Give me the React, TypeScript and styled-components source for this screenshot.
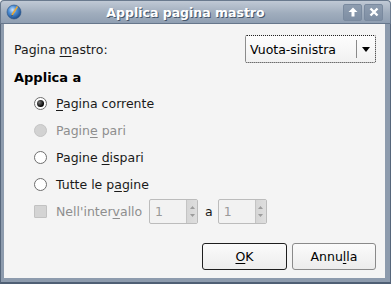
import React from "react";
import styled, { createGlobalStyle } from "styled-components";

const Global = createGlobalStyle`
  html, body { margin: 0; padding: 0; background: #f4f4f4; }
  body { font-family: "DejaVu Sans", Verdana, sans-serif; }
  #root { width: 391px; height: 284px; }
`;

const Window = styled.div`
  width: 391px;
  height: 284px;
  display: flex;
  flex-direction: column;
  box-sizing: border-box;
  background: #8d9bad;
  border-radius: 4px 4px 0 0;
  overflow: hidden;
`;

const TitleBar = styled.div`
  height: 24px;
  flex: none;
  box-sizing: border-box;
  display: flex;
  align-items: center;
  padding: 0 7px 0 5px;
  background: linear-gradient(#c0c9d5, #a0adbd 55%, #909fb2);
  border: 1px solid #6a7a8e;
  border-bottom: 1px solid #66768b;
  border-radius: 4px 4px 0 0;
`;

const Title = styled.div`
  flex: 1;
  text-align: center;
  color: #ffffff;
  font-weight: bold;
  font-size: 12.5px;
  text-shadow: 1px 1px 0 #46566a;
  padding-left: 6px;
`;

const TitleButtons = styled.div`
  display: flex;
  gap: 2px;
`;

const TitleButton = styled.div`
  width: 19px;
  height: 17px;
  border-radius: 2px;
  background: linear-gradient(#8e9db0, #7e8ea3);
  border: 1px solid #7a8a9f;
  box-sizing: border-box;
  display: flex;
  align-items: center;
  justify-content: center;
`;

const Frame = styled.div`
  flex: 1;
  display: flex;
  box-sizing: border-box;
  padding: 0 5px 4px 3px;
  border-left: 1px solid #56667b;
  border-right: 1px solid #56667b;
  border-bottom: 2px solid #4f5f74;
  background: #8d9bad;
`;

const Body = styled.div`
  flex: 1;
  background: #f4f4f4;
  box-sizing: border-box;
  padding: 11px 9px 0 10px;
  display: flex;
  flex-direction: column;
  font-size: 12.5px;
  color: #1a1a1a;
`;

const TopRow = styled.div`
  display: flex;
  align-items: center;
  justify-content: space-between;
  height: 28px;
`;

const U = styled.span`
  text-decoration: underline;
  text-underline-offset: 2px;
`;

const Combo = styled.div`
  width: 131px;
  height: 28px;
  box-sizing: border-box;
  border: 1px dotted #222;
  border-radius: 2px;
  background: linear-gradient(#fdfdfd, #f1f1f1);
  display: flex;
  align-items: center;
`;

const ComboText = styled.div`
  flex: 1;
  padding-left: 4px;
  color: #000;
`;

const ComboArrow = styled.div`
  width: 18px;
  height: 18px;
  border-left: 1px solid #8a8a8a;
  display: flex;
  align-items: center;
  justify-content: center;
`;

const Heading = styled.div`
  font-weight: bold;
  font-size: 13px;
  color: #000;
  margin-top: 7px;
  line-height: 16px;
`;

const Options = styled.div`
  display: flex;
  flex-direction: column;
  padding-left: 20px;
  margin-top: 4px;
`;

const OptionRow = styled.div<{ $disabled?: boolean }>`
  height: 27px;
  display: flex;
  align-items: center;
  gap: 9px;
  color: ${(p) => (p.$disabled ? "#8e8e8e" : "#1a1a1a")};
`;

const Radio = styled.div<{ $checked?: boolean; $disabled?: boolean }>`
  width: 13px;
  height: 13px;
  box-sizing: border-box;
  border-radius: 50%;
  border: 1px solid ${(p) => (p.$disabled ? "#c4c4c4" : "#6e6e6e")};
  background: ${(p) => (p.$disabled ? "#d2d2d2" : "#ffffff")};
  display: flex;
  align-items: center;
  justify-content: center;
  &::after {
    content: "";
    display: ${(p) => (p.$checked ? "block" : "none")};
    width: 7px;
    height: 7px;
    border-radius: 50%;
    background: radial-gradient(circle at 35% 35%, #777, #000 70%);
  }
`;

const Check = styled.div`
  width: 13px;
  height: 13px;
  box-sizing: border-box;
  border: 1px solid #c2c2c2;
  border-radius: 1px;
  background: #d4d4d4;
`;

const RangeLabel = styled.span`
  width: 84px;
`;

const Spin = styled.div`
  width: 49px;
  height: 25px;
  box-sizing: border-box;
  border: 1px solid #bcbcbc;
  border-radius: 2px;
  background: #f2f2f2;
  display: flex;
  color: #9a9a9a;
`;

const SpinValue = styled.div`
  flex: 1;
  display: flex;
  align-items: center;
  padding-left: 5px;
`;

const SpinButtons = styled.div`
  width: 10px;
  background: linear-gradient(90deg, #d6d6d6, #dedede);
  border-left: 1px solid #c4c4c4;
  display: flex;
  flex-direction: column;
  align-items: center;
  justify-content: space-around;
  padding: 3px 0;
`;

const RangeSep = styled.span`
  color: #1a1a1a;
  margin: 0 -4px 0 -2px;
`;

const ButtonRow = styled.div`
  display: flex;
  justify-content: flex-end;
  gap: 5px;
  margin-top: 18px;
`;

const Button = styled.div<{ $default?: boolean }>`
  width: ${(p) => (p.$default ? 85 : 84)}px;
  height: 27px;
  box-sizing: border-box;
  border: 1px solid ${(p) => (p.$default ? "#1e1e1e" : "#8a8a8a")};
  border-radius: 3px;
  background: linear-gradient(#fbfbfb, #ececec);
  display: flex;
  align-items: center;
  justify-content: center;
  color: #000;
`;

const Globe = () => (
  <svg width="16" height="16" viewBox="0 0 16 16">
    <defs>
      <radialGradient id="g" cx="40%" cy="35%" r="65%">
        <stop offset="0" stopColor="#cfe6ff" />
        <stop offset="0.45" stopColor="#4d8fd6" />
        <stop offset="1" stopColor="#1d4f8f" />
      </radialGradient>
    </defs>
    <circle cx="8" cy="8" r="7" fill="url(#g)" stroke="#2f5585" strokeWidth="0.6" />
    <path d="M11.5 2.5 L6 11" stroke="#e8a83a" strokeWidth="1.6" />
    <path d="M6 11 L5.3 12.6 L6.7 11.6 Z" fill="#222" />
  </svg>
);

const SmallTri = ({ up }: { up?: boolean }) => (
  <svg width="5" height="3" viewBox="0 0 5 3">
    <path d={up ? "M0 3 L2.5 0 L5 3 Z" : "M0 0 L2.5 3 L5 0 Z"} fill="#9c9c9c" />
  </svg>
);

const SpinBox = () => (
  <Spin>
    <SpinValue>1</SpinValue>
    <SpinButtons>
      <SmallTri up />
      <SmallTri />
    </SpinButtons>
  </Spin>
);

export default function App() {
  return (
    <>
      <Global />
      <Window>
        <TitleBar>
          <Globe />
          <Title>Applica pagina mastro</Title>
          <TitleButtons>
            <TitleButton>
              <svg width="10" height="10" viewBox="0 0 10 10">
                <path d="M5 0.5 L9.5 5 L6.5 5 L6.5 9.5 L3.5 9.5 L3.5 5 L0.5 5 Z" fill="#fff" />
              </svg>
            </TitleButton>
            <TitleButton>
              <svg width="10" height="10" viewBox="0 0 10 10">
                <path d="M1.5 1.5 L8.5 8.5 M8.5 1.5 L1.5 8.5" stroke="#fff" strokeWidth="2.4" />
              </svg>
            </TitleButton>
          </TitleButtons>
        </TitleBar>
        <Frame>
          <Body>
            <TopRow>
              <span>
                Pagina <U>m</U>astro:
              </span>
              <Combo>
                <ComboText>Vuota-sinistra</ComboText>
                <ComboArrow>
                  <svg width="8" height="5" viewBox="0 0 8 5">
                    <path d="M0 0 L8 0 L4 5 Z" fill="#000" />
                  </svg>
                </ComboArrow>
              </Combo>
            </TopRow>
            <Heading>Applica a</Heading>
            <Options>
              <OptionRow>
                <Radio $checked />
                <span>
                  <U>P</U>agina corrente
                </span>
              </OptionRow>
              <OptionRow $disabled>
                <Radio $disabled />
                <span>
                  Pagin<U>e</U> pari
                </span>
              </OptionRow>
              <OptionRow>
                <Radio />
                <span>
                  Pagine <U>d</U>ispari
                </span>
              </OptionRow>
              <OptionRow>
                <Radio />
                <span>
                  Tutte le p<U>a</U>gine
                </span>
              </OptionRow>
              <OptionRow $disabled>
                <Check />
                <RangeLabel>
                  Nell'inter<U>v</U>allo
                </RangeLabel>
                <SpinBox />
                <RangeSep>a</RangeSep>
                <SpinBox />
              </OptionRow>
            </Options>
            <ButtonRow>
              <Button $default>
                <span>
                  <U>O</U>K
                </span>
              </Button>
              <Button>
                <span>
                  Annu<U>l</U>la
                </span>
              </Button>
            </ButtonRow>
          </Body>
        </Frame>
      </Window>
    </>
  );
}
